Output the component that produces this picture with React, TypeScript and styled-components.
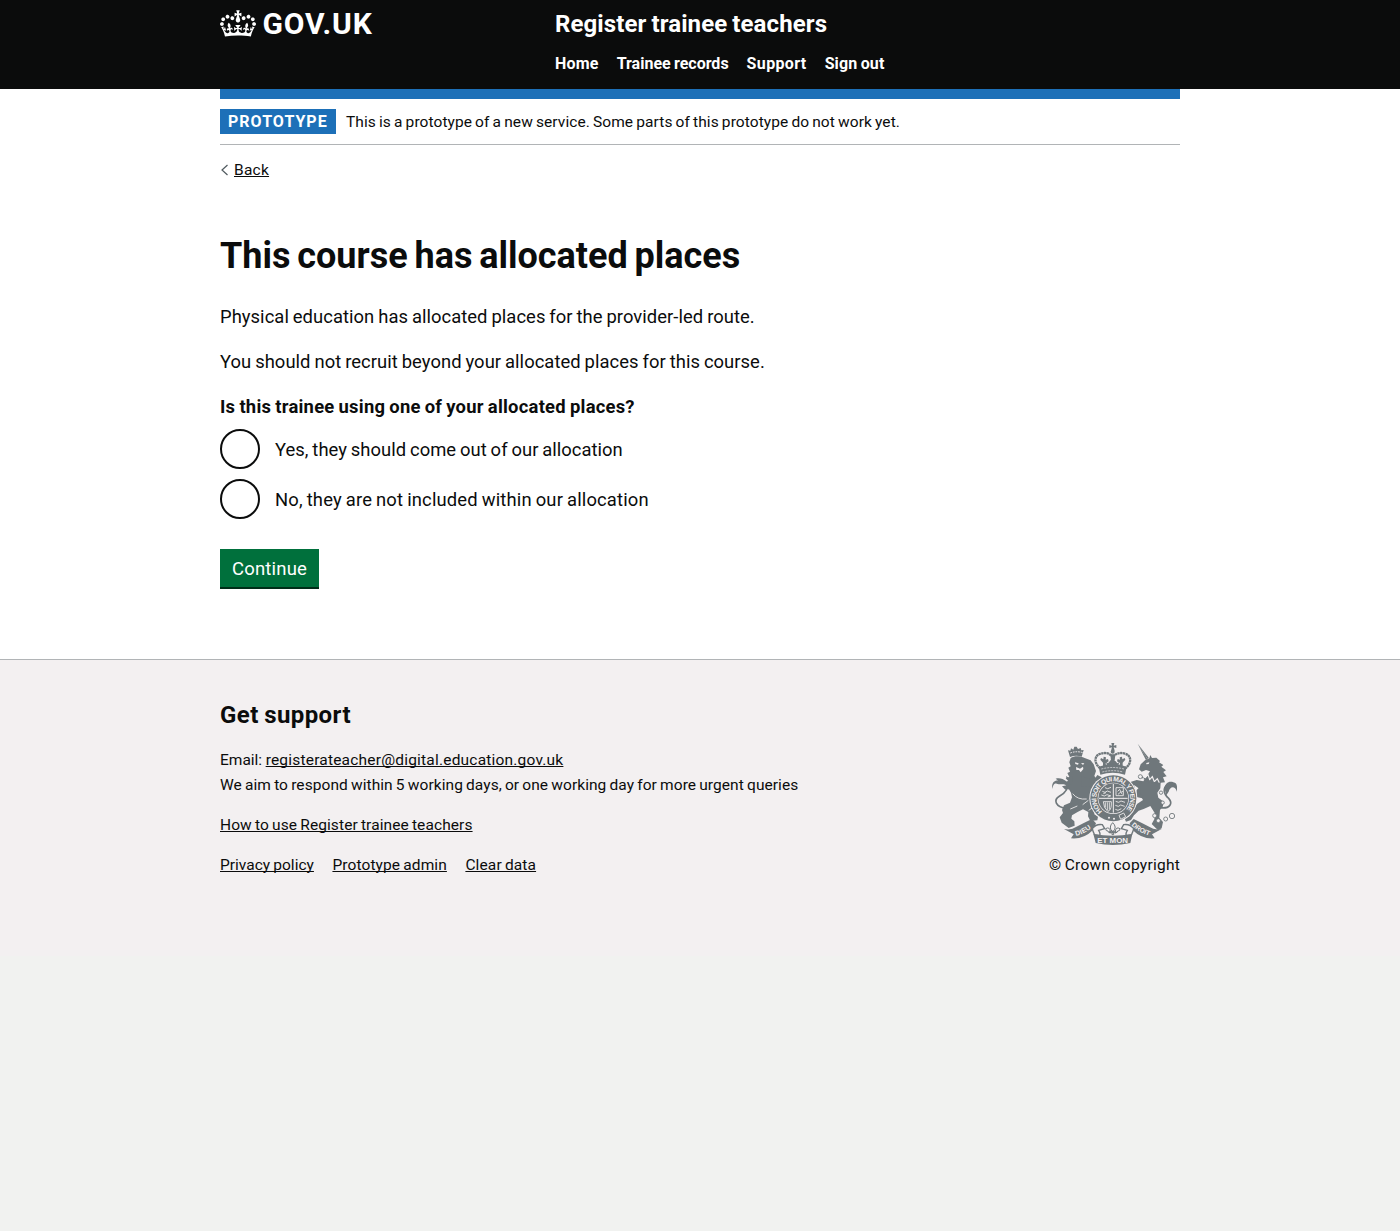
import React from "react";
import styled, { createGlobalStyle } from "styled-components";

const INK = "#0b0c0c";
const CREST = "#6f777b";
const PAPER = "#f3f0f1";

const GlobalStyle = createGlobalStyle`
  html { background: #f1f2f0; }
  body {
    margin: 0;
    background: #ffffff;
    color: ${INK};
    font-family: Roboto, "Liberation Sans", sans-serif;
  }
  * { box-sizing: border-box; }
`;

type Tracked = { $track?: number };

const Container = styled.div`
  width: 960px;
  margin: 0 auto;
`;

const Header = styled.header`
  height: 89px;
  background: ${INK};
  color: #ffffff;
`;

const HeaderInner = styled(Container)`
  display: grid;
  grid-template-columns: 335px 1fr;
`;

const Logo = styled.a`
  display: flex;
  align-items: flex-start;
  gap: 6.5px;
  padding-top: 9px;
  color: #ffffff;
  text-decoration: none;

  svg { display: block; width: 36px; height: 27px; margin-top: 0.5px; }
`;

const LogoText = styled.span`
  font-size: 30px;
  font-weight: 700;
  line-height: 30px;
  letter-spacing: 0.9px;
`;

const ServiceName = styled.a`
  display: block;
  padding-top: 9px;
  color: #ffffff;
  font-size: 24px;
  font-weight: 700;
  line-height: 30px;
  letter-spacing: 0.1px;
  word-spacing: -1px;
  text-decoration: none;
`;

const Nav = styled.nav`
  display: flex;
  gap: 18px;
  padding-top: 15px;
`;

const NavLink = styled.a<Tracked>`
  color: #ffffff;
  font-size: 16px;
  font-weight: 700;
  line-height: 20px;
  letter-spacing: ${(p) => p.$track ?? 0}px;
  word-spacing: -0.7px;
  text-decoration: none;
`;

const BlueBar = styled.div`
  height: 10px;
  background: #1d70b8;
`;

const PhaseBanner = styled.div`
  display: flex;
  align-items: center;
  gap: 10px;
  padding: 10px 0;
  border-bottom: 1px solid #b1b4b6;
`;

const Tag = styled.strong`
  width: 116px;
  height: 25px;
  padding-left: 8px;
  background: #1d70b8;
  color: #ffffff;
  font-size: 16px;
  line-height: 25px;
  letter-spacing: 1.02px;
`;

const Small = styled.span<Tracked>`
  font-size: 15.5px;
  line-height: 25px;
  letter-spacing: ${(p) => p.$track ?? 0.1}px;
  word-spacing: -0.8px;
  white-space: nowrap;
`;

const PhaseText = styled(Small)`
  height: 25px;
  line-height: 27px;
`;

const SmallLink = styled(Small).attrs({ as: "a", href: "#" })`
  color: ${INK};
  text-decoration: underline;
  text-decoration-thickness: 1px;
  text-decoration-skip-ink: none;
  text-underline-offset: 1px;
`;

const BackRow = styled.div`
  display: flex;
  align-items: center;
  gap: 5px;
  height: 20px;
  margin-top: 15px;

  svg { display: block; }
`;

const Main = styled.main`
  padding: 56px 0 70px;
`;

const Title = styled.h1`
  margin: 0 0 28px;
  font-size: 36px;
  font-weight: 700;
  line-height: 40px;
  letter-spacing: -0.02px;
  word-spacing: -2px;
`;

const Paragraph = styled.p<Tracked>`
  margin: 0 0 20px;
  font-size: 18.4px;
  line-height: 25px;
  letter-spacing: ${(p) => p.$track ?? 0.05}px;
  word-spacing: -0.7px;
`;

const Fieldset = styled.fieldset`
  margin: 0 0 30px;
  padding: 0;
  border: 0;
`;

const Legend = styled.legend`
  margin-bottom: 10px;
  padding: 0;
  font-size: 18.4px;
  font-weight: 700;
  line-height: 25px;
  letter-spacing: 0.235px;
  word-spacing: -0.7px;
`;

const Radios = styled.div`
  display: grid;
  gap: 10px;
`;

const RadioLabel = styled.label<Tracked>`
  display: flex;
  align-items: center;
  gap: 15px;
  height: 40px;
  font-size: 18.4px;
  line-height: 25px;
  letter-spacing: ${(p) => p.$track ?? 0.03}px;
  word-spacing: -0.7px;
`;

const Radio = styled.input.attrs({ type: "radio", name: "allocation" })`
  appearance: none;
  width: 40px;
  height: 40px;
  margin: 0;
  border: 2px solid ${INK};
  border-radius: 50%;
  background: transparent;
`;

const Button = styled.button`
  display: block;
  width: 99px;
  height: 38px;
  margin: 0 0 2px;
  padding: 2px 0 0;
  border: 0;
  background: #00703c;
  box-shadow: 0 2px 0 #002d18;
  color: #ffffff;
  font: 400 18.5px/36px Roboto, "Liberation Sans", sans-serif;
  letter-spacing: 0.2px;
`;

const Footer = styled.footer`
  height: 297px;
  padding-top: 40px;
  border-top: 1px solid #b1b4b6;
  background: ${PAPER};
`;

const FooterInner = styled(Container)`
  display: flex;
  justify-content: space-between;
  align-items: flex-end;
`;

const FooterHeading = styled.h2`
  margin: 0 0 18px;
  font-size: 24px;
  font-weight: 700;
  line-height: 30px;
  letter-spacing: 0.43px;
  word-spacing: -1px;
`;

const FooterBlock = styled.div`
  display: flex;
  flex-direction: column;
  margin-bottom: 15px;
`;

const FooterLinks = styled.div`
  display: flex;
  gap: 18.5px;
`;

const Inline = styled.div`
  display: flex;
  gap: 3.5px;
`;

const Copyright = styled.div`
  display: flex;
  flex-direction: column;
  align-items: center;
  gap: 8px;
  width: 131px;

  svg { display: block; }
`;

const Crown = () => (
  <svg viewBox="0 0 132 97" fill="#ffffff" aria-hidden="true">
    <path d="M25 30.2c3.5 1.5 7.7-.2 9.1-3.7 1.5-3.6-.2-7.8-3.9-9.2-3.6-1.4-7.6.3-9.1 3.9-1.4 3.5.3 7.5 3.9 9zM9 39.5c3.6 1.5 7.8-.2 9.2-3.7 1.5-3.6-.2-7.8-3.9-9.1-3.6-1.5-7.6.2-9.1 3.8-1.4 3.5.3 7.5 3.8 9zM4.4 57.2c3.5 1.5 7.7-.2 9.1-3.8 1.5-3.6-.2-7.7-3.9-9.1-3.5-1.5-7.6.3-9.1 3.8-1.4 3.5.3 7.6 3.9 9.1zm38.3-21.4c3.5 1.5 7.7-.2 9.1-3.8 1.5-3.6-.2-7.7-3.9-9.1-3.6-1.5-7.6.3-9.1 3.8-1.3 3.6.4 7.7 3.9 9.1zm64.4-5.6c-3.6 1.5-7.8-.2-9.1-3.7-1.5-3.6.2-7.8 3.8-9.2 3.6-1.4 7.7.3 9.2 3.9 1.3 3.5-.4 7.5-3.9 9zm15.9 9.3c-3.6 1.5-7.7-.2-9.1-3.7-1.5-3.6.2-7.8 3.7-9.1 3.6-1.5 7.7.2 9.2 3.8 1.5 3.5-.3 7.5-3.8 9zm4.7 17.7c-3.6 1.5-7.8-.2-9.2-3.8-1.5-3.6.2-7.7 3.9-9.1 3.6-1.5 7.7.3 9.2 3.8 1.3 3.5-.4 7.6-3.9 9.1zM89.3 35.8c-3.6 1.5-7.8-.2-9.2-3.8-1.4-3.6.2-7.7 3.9-9.1 3.6-1.5 7.7.3 9.2 3.8 1.4 3.6-.3 7.7-3.9 9.1zM69.7 17.7l8.9 4.7V9.3l-8.9 2.8c-.2-.3-.5-.6-.9-.9L72.4 0H59.6l3.5 11.2c-.3.3-.6.5-.9.9l-8.8-2.8v13.1l8.8-4.7c.3.3.6.7.9.9l-5 15.4v.1c-.2.8-.4 1.6-.4 2.4 0 4.1 3.1 7.5 7 8.1h.2c.3 0 .7.1 1 .1.4 0 .7 0 1-.1h.2c4-.6 7.1-4.1 7.1-8.1 0-.8-.1-1.7-.4-2.4V34l-5.1-15.4c.4-.2.7-.6 1-.9zM66 92.8c16.9 0 32.8 1.1 47.1 3.2 4-16.9 8.9-26.7 14-33.5l-9.6-3.4c1 4.9 1.1 7.2 0 10.2-1.5-1.4-3-4.3-4.2-8.7L108.6 76c2.8-2 5-3.2 7.5-3.3-4.4 9.4-10 11.9-13.6 11.2-4.3-.8-6.3-4.6-5.6-7.9 1-4.7 5.7-5.9 8-.5 4.3-8.7-3-11.4-7.6-8.8 7.1-7.2 7.9-13.5 2.1-21.1-8 6.1-8.1 12.3-4.5 20.8-4.7-5.4-12.1-2.5-9.5 6.2 3.4-5.2 7.9-2 7.2 3.1-.6 4.3-6.4 7.8-13.5 7.2-10.3-.9-10.9-8-11.2-13.8 2.5-.5 7.1 1.8 11 7.3L80.2 60c-4.1 4.4-8 5.3-12.3 5.4 1.4-4.4 8-11.6 8-11.6H55.5s6.4 7.2 7.9 11.6c-4.2-.1-8-1-12.3-5.4l1.4 16.4c3.9-5.5 8.5-7.7 10.9-7.3-.3 5.8-.9 12.8-11.1 13.8-7.2.6-12.9-2.9-13.5-7.2-.7-5 3.8-8.3 7.1-3.1 2.7-8.7-4.6-11.6-9.4-6.2 3.7-8.5 3.6-14.7-4.6-20.8-5.8 7.6-5 13.9 2.2 21.1-4.7-2.6-11.9.1-7.7 8.8 2.3-5.5 7.1-4.2 8.1.5.7 3.3-1.3 7.1-5.7 7.9-3.5.7-9-1.8-13.5-11.2 2.5.1 4.7 1.3 7.5 3.3l-4.7-15.4c-1.2 4.4-2.7 7.2-4.3 8.7-1.1-3-.9-5.3 0-10.2l-9.5 3.4c5 6.9 9.9 16.7 14 33.5 14.8-2.1 30.8-3.2 47.7-3.2z" />
  </svg>
);

const CrestText = styled.text`
  fill: ${PAPER};
  font-family: "Liberation Sans", sans-serif;
  font-weight: 700;
`;

const RoyalArms = () => (
  <svg width="125" height="102" viewBox="36 24 375 306" fill={CREST} aria-hidden="true">
    <defs>
      <path id="motto" d="M187 229A51 51 0 1 1 257 225" />
      <path id="dieu" d="M108 303Q138 296 163 271" />
      <path id="droit" d="M274 271Q298 294 334 303" />
    </defs>

    {/* imperial crown */}
    <path d="M214 24h9l-2 8 8-2v9l-8-2 3 10h-11l3-10-8 2v-9l8 2z" />
    <circle cx="218" cy="50" r="6" />
    <path d="M181 100C160 84 163 61 182 56C198 51 211 56 218 67C225 56 239 51 255 56C274 61 277 84 256 100" fill="none" stroke={CREST} strokeWidth="7" strokeDasharray="7 1.2" />
    <path d="M211 58h15l-3 29h-9zM189 83l-8-9 2-5 7 4 1-8 7 2-1 7 7-2 2 7-9 6 2 12h-10zM248 83l8-9-2-5-7 4-1-8-7 2 1 7-7-2-2 7 9 6-2 12h10zM204 85l14-17 14 17 6-4-4 14h-32l-4-14z" />
    <path d="M176 95q42-14 84 0l-5 24q-37-11-74 0z" />
    <path d="M184 102q34-9 68 0M187 111q31-8 62 0" fill="none" stroke={PAPER} strokeWidth="2" strokeDasharray="6 3" />

    {/* lion, crowned */}
    <path d="M90 66l-6-20 7 1 2-7 7 4 3-9h7l4 7 8-3 2 7 7-1-6 20q-17-6-35 1z" />
    <path d="M91 54q18-7 38-1" fill="none" stroke={PAPER} strokeWidth="3" strokeDasharray="5 3" />
    <path d="M92 69C103 62 121 63 134 69L152 76 161 88 168 108 163 123 172 134 164 139 170 150 160 158 153 162 151 178 154 197 163 212 163 238 174 245 172 256 151 258 144 244 145 231 129 223 114 230 96 241 94 251 103 259 104 272 86 279 65 263 59 247 69 234 66 225 72 211 90 203 96 187 93 173 86 161 76 164 66 154 80 151 71 142 85 139 77 129 88 126 82 114 90 110 85 98 92 94 88 82Z" />
    <path d="M96 124l-10 4-8-5 2 10 8 3-10 6 8 9 13-5zM125 124l25 9 16-4 6-9 13 7-4 17-30 12-26-3z" />
    <path d="M105 82l11 3-2 4-8-2zM123 84l10 1-4 5zM108 96l12 5 9-6 1 7-8 10-5-7-8 0z" fill={PAPER} />
    <path d="M80 221C45 215 40 195 58 184C75 174 88 163 80 146" fill="none" stroke={CREST} strokeWidth="5" />
    <path d="M83 158C78 142 62 151 50 146C41 144 39 153 37 162C34 144 43 135 55 137L47 131C69 125 92 143 87 166Z" />
    <path d="M98 176q15 19 42 16M128 209l17-13M91 222l21-9M158 218l-12 8" stroke={PAPER} strokeWidth="2.5" fill="none" />

    {/* unicorn */}
    <path d="M293 26l33 42-8 8z" />
    <path d="M296 32l25 38" stroke={PAPER} strokeWidth="1.5" strokeDasharray="3 4" />
    <path d="M302 88L315 76L328 70 331 60 336 69 349 68 360 78 357 82 370 90 364 95 378 106 370 111 380 124 369 127 375 142 362 143 361 160 352 173 355 188 369 199 369 214 360 225 358 249 369 261 365 280 354 286 335 267 343 253 344 234 331 213 311 222 296 227 282 241 273 255 258 260 253 248 267 245 278 227 291 207 309 195 299 178 298 161 281 149 274 151 269 142 290 135 310 139 322 121 330 109 318 105 305 110 297 103Z" />
    <path d="M307 143L282 151 286 166 278 179 268 170 276 165 271 150 290 137ZM302 153l-2 24 10 5-3 8-18-4 1-21z" />
    <path d="M319 84l9-2-2 5-7 1z" fill={PAPER} />
    <path d="M308 116l8 12 8-9 5 15 8-9 6 15 9-9 6 12" fill="none" stroke={PAPER} strokeWidth="3.5" />
    <path d="M305 125q23 19 53 20" fill="none" stroke={CREST} strokeWidth="5" strokeDasharray="6 2" />
    <path d="M360 218C391 222 399 205 386 190C369 176 369 158 382 149" fill="none" stroke={CREST} strokeWidth="5" />
    <path d="M377 174C368 149 384 136 400 142C412 144 412 155 411 170C405 151 390 154 386 170L379 181Z" />
    <g fill={PAPER} stroke={CREST} strokeWidth="2.6">
      <circle cx="301" cy="125" r="6" />
      <circle cx="363" cy="173" r="5" />
      <circle cx="368" cy="203" r="5" />
      <circle cx="344" cy="242" r="6" />
      <circle cx="355" cy="257" r="6" />
      <circle cx="377" cy="252" r="6" />
      <circle cx="396" cy="243" r="8" />
    </g>

    {/* garter and quartered shield */}
    <circle cx="220" cy="190" r="72" fill={PAPER} />
    <circle cx="220" cy="190" r="69" />
    <circle cx="220" cy="190" r="47" fill={PAPER} />
    <circle cx="220" cy="190" r="45" />
    <path d="M177 190h86M220 147v86" stroke={PAPER} strokeWidth="3" />
    <g fill="none" stroke={PAPER} strokeWidth="2.5">
      <path d="M187 169l8 3 7-4 11 4M184 180l9 3 8-4 12 4M195 158l8 3 10-4M190 176l8-3M203 186l8-3" />
      <path d="M228 158h22v24h-22zM233 169l6-6 4 9 6-3M234 178l7-6 6 5" />
      <path d="M190 200h24v10q-1 17-11 19-12-9-13-29M196 202v16M202 202v23M208 202v22" />
      <path d="M227 199l9 3 7-4 12 4M226 211l9 3 7-4 12 4M226 223l8 3 10-5" />
    </g>
    <CrestText fontSize="20"><textPath href="#motto" textLength="240">HONI SOIT QUI MAL Y PENSE</textPath></CrestText>
    <circle cx="207" cy="248" r="3" fill={PAPER} />
    <circle cx="222" cy="251" r="3" fill={PAPER} />
    <path d="M237 241l14-7 6 11-15 8z" fill="none" stroke={PAPER} strokeWidth="2.5" />

    {/* motto ribbon */}
    <path d="M72 282Q95 286 108 276Q135 262 156 252L168 265 160 284Q130 314 93 310L101 298Z" />
    <path d="M365 282Q342 286 329 276Q302 262 281 252L269 265 277 284Q307 314 344 310L336 298Z" />
    <path d="M157 281Q168 266 187 269L194 281 176 286Q182 295 180 302L164 300Q158 288 157 281ZM281 281Q270 266 251 269L244 281 262 286Q256 295 258 302L274 300Q280 288 281 281Z" fill={PAPER} stroke={CREST} strokeWidth="4" />
    <path d="M160 297Q218 307 277 297L271 324Q218 336 167 324Z" />
    <CrestText fontSize="21"><textPath href="#dieu" textLength="52">DIEU</textPath></CrestText>
    <CrestText fontSize="20"><textPath href="#droit" textLength="62">DROIT</textPath></CrestText>
    <CrestText x="218" y="324" fontSize="23" textAnchor="middle" textLength="92" lengthAdjust="spacingAndGlyphs">ET MON</CrestText>
    <path d="M218 263q-13 13-2 26h4q12-13-2-26zM211 289q-2-15-14-8 0 8 7 7-1 4 7 6zM226 289q2-15 14-8 0 8-7 7 1 4-7 6zM208 289h20v4h-20zM216 292h5v7h-5z" fill={PAPER} stroke={CREST} strokeWidth="3" />
  </svg>
);

const navItems = [
  { label: "Home", track: 0.2 },
  { label: "Trainee records", track: 0 },
  { label: "Support", track: 0.36 },
  { label: "Sign out", track: 0.12 },
];

const footerItems = [
  { label: "Privacy policy", track: 0.02 },
  { label: "Prototype admin", track: 0.1 },
  { label: "Clear data", track: 0.12 },
];

export default function App() {
  return (
    <>
      <GlobalStyle />
      <Header>
        <HeaderInner>
          <Logo href="#">
            <Crown />
            <LogoText>GOV.UK</LogoText>
          </Logo>
          <div>
            <ServiceName href="#">Register trainee teachers</ServiceName>
            <Nav>
              {navItems.map((item) => (
                <NavLink key={item.label} href="#" $track={item.track}>{item.label}</NavLink>
              ))}
            </Nav>
          </div>
        </HeaderInner>
      </Header>

      <Container>
        <BlueBar />
        <PhaseBanner>
          <Tag>PROTOTYPE</Tag>
          <PhaseText $track={0.073}>This is a prototype of a new service. Some parts of this prototype do not work yet.</PhaseText>
        </PhaseBanner>
        <BackRow>
          <svg width="9" height="12" viewBox="0 0 9 12" fill="none" stroke="#505a5f" strokeWidth="1.2" aria-hidden="true">
            <path d="M7.5 1L2 6l5.5 5" />
          </svg>
          <SmallLink $track={0.25}>Back</SmallLink>
        </BackRow>

        <Main>
          <Title>This course has allocated places</Title>
          <Paragraph>Physical education has allocated places for the provider-led route.</Paragraph>
          <Paragraph>You should not recruit beyond your allocated places for this course.</Paragraph>
          <Fieldset>
            <Legend>Is this trainee using one of your allocated places?</Legend>
            <Radios>
              <RadioLabel><Radio />Yes, they should come out of our allocation</RadioLabel>
              <RadioLabel $track={0.15}><Radio />No, they are not included within our allocation</RadioLabel>
            </Radios>
          </Fieldset>
          <Button type="button">Continue</Button>
        </Main>
      </Container>

      <Footer>
        <FooterInner>
          <div>
            <FooterHeading>Get support</FooterHeading>
            <FooterBlock>
              <Inline>
                <Small $track={0}>Email:</Small>
                <SmallLink $track={0.2}>registerateacher@digital.education.gov.uk</SmallLink>
              </Inline>
              <Small $track={0.073}>We aim to respond within 5 working days, or one working day for more urgent queries</Small>
            </FooterBlock>
            <FooterBlock>
              <Inline><SmallLink $track={0.095}>How to use Register trainee teachers</SmallLink></Inline>
            </FooterBlock>
            <FooterLinks>
              {footerItems.map((item) => (
                <SmallLink key={item.label} $track={item.track}>{item.label}</SmallLink>
              ))}
            </FooterLinks>
          </div>
          <Copyright>
            <RoyalArms />
            <Small $track={0.25}>© Crown copyright</Small>
          </Copyright>
        </FooterInner>
      </Footer>
    </>
  );
}
